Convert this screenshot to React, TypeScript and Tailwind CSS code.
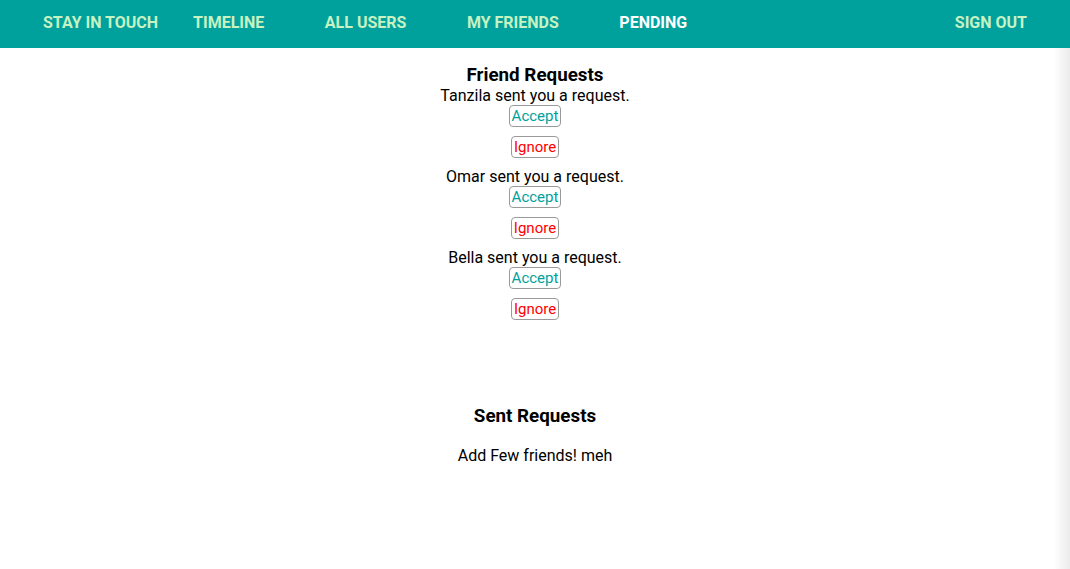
import React from "react";

const requests = ["Tanzila", "Omar", "Bella"];

export default function App() {
  return (
    <div className="min-h-[569px] bg-white text-black" style={{ fontFamily: "Roboto, 'Liberation Sans', sans-serif" }}>
      <nav className="h-[48px] bg-[#00a19d] flex items-center pl-[43px] pr-[43px] pb-[2px] text-[16px] font-bold uppercase text-[#c7f2c1]">
        <span>Stay in touch</span>
        <div className="flex ml-[35px] gap-[60.5px]">
          <span>Timeline</span>
          <span>All users</span>
          <span>My friends</span>
          <span className="text-white">Pending</span>
        </div>
        <span className="ml-auto">Sign out</span>
      </nav>
      <main className="relative flex flex-col items-center min-h-[521px]">
        <h2 className="mt-[15px] text-[18.8px] font-bold leading-[24px]">Friend Requests</h2>
        <div className="flex flex-col items-center">
          {requests.map((name) => (
            <div key={name} className="flex flex-col items-center pb-[10px]">
              <p className="text-[16px] leading-[18px]">{name} sent you a request.</p>
              <button className="h-[22px] px-[2px] border border-[#9a9a9a] rounded-[4px] text-[15px] leading-[20px] text-[#00a19d] bg-white">Accept</button>
              <button className="mt-[9px] h-[22px] px-[2px] border border-[#9a9a9a] rounded-[4px] text-[15px] leading-[20px] text-[#ff0000] bg-white">Ignore</button>
            </div>
          ))}
        </div>
        <h2 className="mt-[74px] text-[18.8px] font-bold leading-[24px]">Sent Requests</h2>
        <p className="mt-[18px] text-[16px] leading-[20px]">Add Few friends! meh</p>
        <div className="absolute right-0 top-0 bottom-0 w-[16px] bg-gradient-to-r from-white to-[#ebebeb]" />
      </main>
    </div>
  );
}
